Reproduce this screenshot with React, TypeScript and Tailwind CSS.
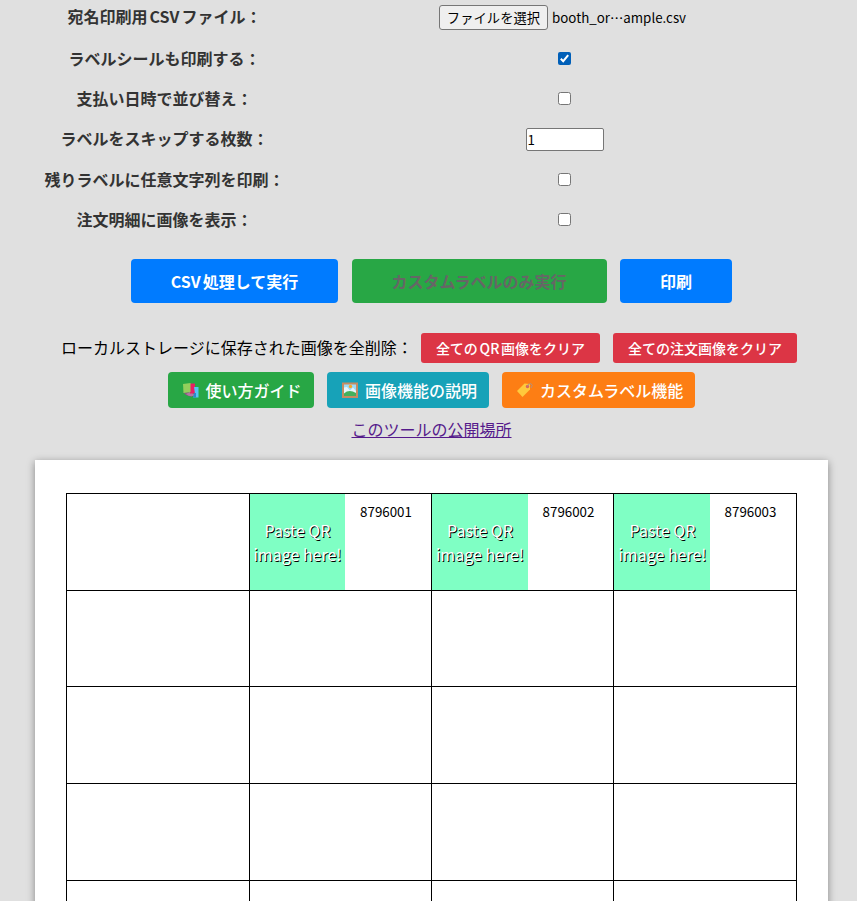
import type { ReactNode } from "react";

function Check({ checked = false }: { checked?: boolean }) {
  return checked ? (
    <span role="checkbox" aria-checked="true" className="block size-[13px] rounded-[2px] bg-[#005fb8]">
      <svg viewBox="0 0 13 13" className="block size-full" fill="none" stroke="white" strokeWidth="2">
        <path d="M2.800 6.800L5.200 9.200L10.200 3.200" />
      </svg>
    </span>
  ) : (
    <span role="checkbox" aria-checked="false" className="block size-[13px] rounded-[2.5px] border border-[#767676] bg-white" />
  );
}

function Row({ label, height, lift = "pb-px", children }: { label: string; height: string; lift?: string; children: ReactNode }) {
  return (
    <div className={`flex items-center ${height}`}>
      <div className={`flex w-[259px] shrink-0 justify-center font-bold whitespace-nowrap text-[#333] ${lift}`}>{label}</div>
      <div className="ml-[7px] flex flex-1 items-center justify-center">{children}</div>
    </div>
  );
}

function Books() {
  return (
    <svg viewBox="0 0 18 16" className="h-4 w-[18px] shrink-0">
      <path d="M1 10L7 10.500L10 14V15L4 13Z" fill="#8d5a80" />
      <path d="M4 12L8 10L12 12V14L7 14Z" fill="#b377a3" />
      <path d="M8 1.500H13V11.500H8Z" fill="#e91e63" />
      <path d="M12 5H16.500V15.500H11L13 12Z" fill="#55c4f5" />
      <path d="M12 11H14V15.500H11Z" fill="#2f86c9" />
      <path d="M1 2L8.500 1V10L1.500 11Z" fill="#93cf5c" />
    </svg>
  );
}

function Frame() {
  return (
    <svg viewBox="0 0 18 16" className="h-4 w-[18px] shrink-0">
      <path d="M1 0.500H17V16H1Z" fill="#c58c62" />
      <path d="M3 2.500H15V14H3Z" fill="#9fdcf8" />
      <circle cx="9.5" cy="4.500" r="1.700" fill="#f9a825" />
      <path d="M3 5.500L6 5L9 8.500L12 5.500L15 9V12H3Z" fill="#e8f5fb" />
      <path d="M3 11.500Q8 7 15 11V14H3Z" fill="#43b05c" />
    </svg>
  );
}

function Tag() {
  return (
    <svg viewBox="0 0 18 16" className="h-4 w-[18px] shrink-0">
      <path d="M1 9L8.500 1.500L14 2L14 7.500L6.500 15Z" fill="#ffc93c" />
      <circle cx="11.500" cy="4.500" r="1.700" fill="#d9635f" />
      <path d="M11.500 4.500Q12 1.200 15 1.700Q17.500 3 15 6" fill="none" stroke="#a8928c" strokeWidth="0.9" />
    </svg>
  );
}

const rows = [
  { height: "h-[97px]", ids: ["", "8796001", "8796002", "8796003"] },
  { height: "h-[96px]", ids: ["", "", "", ""] },
  { height: "h-[97px]", ids: ["", "", "", ""] },
  { height: "h-[97px]", ids: ["", "", "", ""] },
  { height: "h-[97px]", ids: ["", "", "", ""] },
];

export default function App() {
  return (
    <div lang="ja" className="h-[901px] w-[857px] overflow-hidden bg-[#e0e0e0] font-['Noto_Sans_CJK_JP',sans-serif] text-base leading-6 text-black [text-autospace:normal]">
      <div className="ml-[35px] w-[793px]">
        <Row label="宛名印刷用CSVファイル：" height="h-[39px] pb-1" lift="pb-[3px]">
          <div className="flex w-[251px] items-center gap-1 text-[13.333px]">
            <button className="h-[25px] w-[109px] rounded-[3px] border border-[#767676] bg-[#efefef] leading-[22px] whitespace-nowrap">ファイルを選択</button>
            <span className="pt-px whitespace-nowrap">booth_or…ample.csv</span>
          </div>
        </Row>
        <Row label="ラベルシールも印刷する：" height="h-[39px]"><Check checked /></Row>
        <Row label="支払い日時で並び替え：" height="h-[41px]"><Check /></Row>
        <Row label="ラベルをスキップする枚数：" height="h-[41px] pb-px" lift="pb-0.5">
          <div className="flex h-[23px] w-[78px] items-center rounded-[2px] border border-[#767676] bg-white pt-px pl-px text-[13.333px]">1</div>
        </Row>
        <Row label="残りラベルに任意文字列を印刷：" height="h-[39px]"><Check /></Row>
        <Row label="注文明細に画像を表示：" height="h-[41px]"><Check /></Row>

        <div className="mt-[19px] flex h-11 pl-24 font-bold text-white">
          <button className="w-[207px] rounded bg-[#007bff]">CSV処理して実行</button>
          <button className="ml-[14px] w-[255px] rounded bg-[#28a745] pr-px text-[#666]">カスタムラベルのみ実行</button>
          <button className="ml-[13px] w-28 rounded bg-[#007bff]">印刷</button>
        </div>

        <div className="mt-[30px] flex h-[30px] items-center pl-[26px]">
          <span className="w-[360px] pb-0.5 whitespace-nowrap">ローカルストレージに保存された画像を全削除：</span>
          <button className="h-[30px] w-[179px] rounded-[3px] bg-[#dc3545] text-sm font-medium whitespace-nowrap text-white">全てのQR画像をクリア</button>
          <button className="ml-[13px] h-[30px] w-[184px] rounded-[3px] bg-[#dc3545] text-sm font-medium whitespace-nowrap text-white">全ての注文画像をクリア</button>
        </div>

        <div className="mt-[9px] flex h-9 gap-[13px] pl-[133px] font-medium whitespace-nowrap text-white">
          <a className="flex w-[146px] items-center rounded bg-[#28a745] pl-[14px]"><Books /><span className="ml-[5.5px]">使い方ガイド</span></a>
          <a className="flex w-[162px] items-center rounded bg-[#17a2b8] pl-[14px]"><Frame /><span className="ml-1.5">画像機能の説明</span></a>
          <a className="flex w-[193px] items-center rounded bg-[#fd7e14] pl-[14px]"><Tag /><span className="ml-1.5">カスタムラベル機能</span></a>
        </div>

        <div className="mt-[9px] flex h-6 justify-center">
          <a className="text-[#551a8b] underline">このツールの公開場所</a>
        </div>

        <main className="mt-[19px] h-[1123px] bg-white px-[31px] pt-[33px] shadow-[0_2px_8px_rgba(0,0,0,0.4)]">
          <table className="w-[731px] table-fixed border-collapse">
            <colgroup>
              <col className="w-[183px]" />
              <col className="w-[182px]" />
              <col className="w-[182px]" />
              <col className="w-[183px]" />
            </colgroup>
            <tbody>
              {rows.map(({ height, ids }, r) => (
                <tr key={r} className={height}>
                  {ids.map((id, c) => (
                    <td key={c} className="border border-black p-0 align-top">
                      {id && (
                        <div className="flex h-24">
                          <div className={`flex shrink-0 items-center justify-center bg-[#7fffc4] text-center text-white [text-shadow:1px_1px_0_black] ${c === 1 ? "w-[95px]" : "w-24"} ${c === 3 ? "pl-px" : ""}`}>
                            <p className="whitespace-nowrap">Paste QR<br />image here!</p>
                          </div>
                          <p className={`flex-1 pt-1.5 text-center text-[13.333px] leading-6 ${c === 3 ? "mr-[5px]" : "mr-1"}`}>{id}</p>
                        </div>
                      )}
                    </td>
                  ))}
                </tr>
              ))}
            </tbody>
          </table>
        </main>
      </div>
    </div>
  );
}
